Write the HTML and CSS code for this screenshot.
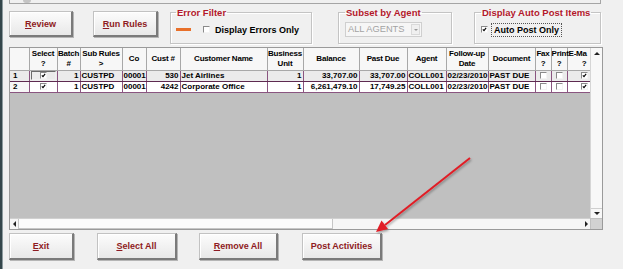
FILE: index.html
```html
<!DOCTYPE html>
<html lang="en">
  <head>
    <meta charset="UTF-8" />
    <meta name="viewport" content="width=device-width, initial-scale=1.0" />
    <title>Post Activities</title>
    <link rel="stylesheet" href="styles.css">
  </head>
  <body>
    <div class="window">
      <div class="top-edge"><span class="top-knob"></span></div>

      <div class="toolbar">
        <button class="btn review"><u>R</u>eview</button>
        <button class="btn run-rules"><u>R</u>un Rules</button>

        <fieldset class="group error-filter">
          <legend>Error Filter</legend>
          <div class="group-row">
            <span class="dash"></span>
            <span class="check"></span>
            <span class="check-text">Display Errors Only</span>
          </div>
        </fieldset>

        <fieldset class="group subset">
          <legend>Subset by Agent</legend>
          <div class="group-row">
            <div class="combo">
              <span class="combo-text">ALL AGENTS</span>
              <span class="combo-btn"><span class="tri-down small"></span></span>
            </div>
          </div>
        </fieldset>

        <fieldset class="group auto-post">
          <legend>Display Auto Post Items</legend>
          <div class="group-row">
            <span class="check checked"><svg viewBox="0 0 7 7"><polyline points="1.2,3.2 2.8,5 5.8,1.2" /></svg></span>
            <span class="check-text focus">Auto Post Only</span>
          </div>
        </fieldset>
      </div>

      <div class="grid">
        <div class="grid-body">
          <table>
            <colgroup>
              <col style="width: 19px">
              <col style="width: 28px">
              <col style="width: 23px">
              <col style="width: 42px">
              <col style="width: 24px">
              <col style="width: 34px">
              <col style="width: 87px">
              <col style="width: 36px">
              <col style="width: 56px">
              <col style="width: 48px">
              <col style="width: 39px">
              <col style="width: 42px">
              <col style="width: 47px">
              <col style="width: 16px">
              <col style="width: 16px">
              <col style="width: 23px">
            </colgroup>
            <thead>
              <tr>
                <th></th>
                <th>Select<br>?</th>
                <th>Batch<br>#</th>
                <th>Sub Rules<br>&gt;</th>
                <th>Co</th>
                <th>Cust #</th>
                <th>Customer Name</th>
                <th>Business<br>Unit</th>
                <th>Balance</th>
                <th>Past Due</th>
                <th>Agent</th>
                <th>Follow-up<br>Date</th>
                <th>Document</th>
                <th>Fax<br>?</th>
                <th>Print<br>?</th>
                <th class="email"><span class="clip">E-Ma</span><span class="q">?</span></th>
              </tr>
            </thead>
            <tbody>
              <tr class="current">
                <td class="num">1</td>
                <td class="c"><span class="cell-focus"><span class="check checked"><svg viewBox="0 0 7 7"><polyline points="1.2,3.2 2.8,5 5.8,1.2" /></svg></span></span></td>
                <td class="r">1</td>
                <td>CUSTPD</td>
                <td>00001</td>
                <td class="r">530</td>
                <td>Jet Airlines</td>
                <td class="r">1</td>
                <td class="r">33,707.00</td>
                <td class="r">33,707.00</td>
                <td>COLL001</td>
                <td>02/23/2010</td>
                <td>PAST DUE</td>
                <td class="c"><span class="check"></span></td>
                <td class="c"><span class="check"></span></td>
                <td class="r"><span class="check checked"><svg viewBox="0 0 7 7"><polyline points="1.2,3.2 2.8,5 5.8,1.2" /></svg></span></td>
              </tr>
              <tr>
                <td class="num">2</td>
                <td class="c"><span class="check checked"><svg viewBox="0 0 7 7"><polyline points="1.2,3.2 2.8,5 5.8,1.2" /></svg></span></td>
                <td class="r">1</td>
                <td>CUSTPD</td>
                <td>00001</td>
                <td class="r">4242</td>
                <td>Corporate Office</td>
                <td class="r">1</td>
                <td class="r">6,261,479.10</td>
                <td class="r">17,749.25</td>
                <td>COLL001</td>
                <td>02/23/2010</td>
                <td>PAST DUE</td>
                <td class="c"><span class="check"></span></td>
                <td class="c"><span class="check"></span></td>
                <td class="r"><span class="check checked"><svg viewBox="0 0 7 7"><polyline points="1.2,3.2 2.8,5 5.8,1.2" /></svg></span></td>
              </tr>
            </tbody>
          </table>
        </div>
        <div class="vscroll">
          <span class="tri-up"></span>
          <span class="vscroll-btn"><span class="tri-down"></span></span>
        </div>
        <div class="hscroll">
          <span class="hscroll-btn"><span class="tri-left"></span></span>
          <span class="thumb"></span>
          <span class="track"></span>
          <span class="hscroll-btn"><span class="tri-right"></span></span>
        </div>
        <div class="corner"></div>
      </div>

      <div class="actions">
        <button class="btn exit"><u>E</u>xit</button>
        <button class="btn select-all"><u>S</u>elect All</button>
        <button class="btn remove-all"><u>R</u>emove All</button>
        <button class="btn post">Post Activities</button>
      </div>

      <!-- callout arrow pointing at the Post Activities button -->
      <svg class="callout" viewBox="0 0 623 269">
        <defs>
          <filter id="soft" x="-20%" y="-20%" width="140%" height="140%">
            <feDropShadow dx="1" dy="1.5" stdDeviation="1" flood-color="#000" flood-opacity="0.35" />
          </filter>
        </defs>
        <g filter="url(#soft)">
          <line x1="470" y1="158" x2="385" y2="225" />
          <polygon points="376,232 388,229 381.5,220.5" />
        </g>
      </svg>
    </div>
  </body>
</html>
```

FILE: styles.css
```css
* {
  margin: 0;
  padding: 0;
  box-sizing: border-box;
}

body {
  font-family: "Liberation Sans", Arial, sans-serif;
  background-color: #f0f0f0;
}

.window {
  position: relative;
  width: 623px;
  height: 269px;
  padding-left: 9px;
  overflow: hidden;
  box-shadow: inset 2px 0 0 #34464b, inset 3px 0 0 #8c9a9e;
}

.top-edge {
  width: 592px;
  height: 4px;
  border: 1px solid #a5a5a5;
  border-top: none;
}

.top-knob {
  display: block;
  width: 8px;
  height: 3px;
  margin-left: 13px;
  background-color: #c4c4c4;
  border-radius: 0 0 3px 3px;
}

/* buttons */
.btn {
  display: flex;
  align-items: center;
  justify-content: center;
  font: bold 9px "Liberation Sans", Arial, sans-serif;
  color: #8e1b22;
  background: linear-gradient(#fcfcfc, #e8e8e8);
  border: 1px solid #c2c2c2;
  border-right: 2px solid #7a7a7a;
  border-bottom: 2px solid #7a7a7a;
  box-shadow: inset 1px 1px 0 #fff, 1px 1px 0 #b5b5b5;
  cursor: pointer;
}

.btn u {
  text-decoration: underline;
}

.toolbar {
  display: flex;
  align-items: flex-start;
  height: 41px;
}

.toolbar .btn {
  margin-top: 7px;
  height: 26px;
}

.review {
  width: 64px;
}

.run-rules {
  width: 65px;
  margin-left: 20px;
}

/* group boxes */
.group {
  margin-top: 3px;
  height: 37px;
  min-width: 0;
  padding: 0 5px;
  border: 1px solid #c4c4c4;
  box-shadow: inset 1px 1px 0 #fff, 1px 1px 0 #fff;
}

.group legend {
  padding: 0 1px;
  font-size: 9.5px;
  font-weight: bold;
  line-height: 11px;
  color: #b3182b;
}

.error-filter {
  width: 142px;
  margin-left: 12px;
}

.subset {
  width: 114px;
  margin-left: 26px;
  padding: 0 6px;
}

.auto-post {
  width: 127px;
  margin-left: 22px;
  padding: 0 6px;
}

.group-row {
  display: flex;
  align-items: center;
  height: 15px;
  margin-top: 4px;
}

.dash {
  width: 15px;
  height: 3px;
  background-color: #e8702a;
}

.error-filter .check {
  margin-left: 12px;
}

.check-text {
  margin-left: 5px;
  font-size: 9px;
  font-weight: bold;
  color: #000;
}

.check-text.focus {
  padding: 1px 2px;
  margin-left: 3px;
  border: 1px dotted #555;
}

.check {
  display: inline-block;
  width: 7px;
  height: 7px;
  border: 1px solid;
  border-color: #8a8a8a #f4f4f4 #f4f4f4 #8a8a8a;
  background-color: #fff;
  vertical-align: middle;
}

.check svg {
  display: block;
  width: 5px;
  height: 5px;
}

.check polyline {
  fill: none;
  stroke: #000;
  stroke-width: 1.6;
}

.combo {
  display: flex;
  width: 77px;
  height: 15px;
  border: 1px solid #cfcfcf;
  background-color: #f6f6f6;
}

.combo-text {
  flex: 1;
  padding-left: 2px;
  font-size: 9.3px;
  line-height: 13px;
  color: #a3a3a3;
}

.combo-btn {
  display: flex;
  align-items: center;
  justify-content: center;
  width: 9px;
  margin: 1px;
  border: 1px solid #dadada;
  background-color: #f0f0f0;
}

/* grid */
.grid {
  display: grid;
  grid-template-columns: 580px 12px;
  grid-template-rows: 170px 11px;
  width: 594px;
  height: 183px;
  margin-top: 2px;
  border: 1px solid #9a9a9a;
}

.grid-body {
  overflow: hidden;
  background-color: #c0c0c0;
}

table {
  width: 580px;
  table-layout: fixed;
  border-collapse: collapse;
  font-weight: bold;
  color: #000;
}

th {
  height: 22px;
  padding: 0;
  font-size: 8px;
  letter-spacing: -0.2px;
  line-height: 10px;
  text-align: center;
  vertical-align: middle;
  background-color: #f7f7f7;
  border: 1px solid #a8a8a8;
  border-top: none;
  white-space: nowrap;
}

th:first-child {
  border-left: none;
}

th.email {
  text-align: left;
}

th.email .clip {
  display: block;
  padding-left: 1px;
}

th.email .q {
  display: block;
  text-align: right;
  padding-right: 3px;
}

td {
  height: 11px;
  padding: 0 1px;
  font-size: 8px;
  line-height: 9px;
  white-space: nowrap;
  overflow: hidden;
  background-color: #fff;
  border: 1px solid #8a5580;
}

td:first-child {
  border-left: none;
  background-color: #f7f7f7;
}

tr.current td {
  background-color: #ebebeb;
  border-bottom-color: #5e2a50;
}

td.num {
  padding-left: 3px;
}

td.r {
  text-align: right;
}

td.c {
  text-align: center;
}

td .check {
  width: 7px;
  height: 7px;
  vertical-align: top;
  margin-top: 1px;
}

td.r .check {
  margin-right: 1px;
}

.cell-focus {
  display: block;
  height: 9px;
  border: 1px solid #555;
  border-color: #6a6a6a #f0f0f0 #f0f0f0 #6a6a6a;
}

.cell-focus .check {
  margin-top: 0;
}

/* scrollbars */
.vscroll {
  display: flex;
  flex-direction: column;
  justify-content: space-between;
  align-items: center;
  background-color: #f8f8f8;
  border-left: 1px solid #d6d6d6;
}

.vscroll .tri-up {
  margin-top: 4px;
}

.vscroll-btn {
  display: flex;
  align-items: center;
  justify-content: center;
  width: 100%;
  height: 10px;
  border-top: 1px solid #cfcfcf;
}

.hscroll {
  display: flex;
  align-items: stretch;
  background-color: #f6f6f6;
  border-top: 1px solid #d0d0d0;
}

.hscroll-btn {
  display: flex;
  align-items: center;
  justify-content: center;
  width: 8px;
}

.thumb {
  width: 315px;
  background-color: #fbfbfb;
  border: 1px solid #c6c6c6;
  border-top: none;
}

.track {
  flex: 1;
}

.corner {
  background-color: #d2d2d2;
  border-top: 1px solid #c0c0c0;
  border-left: 1px solid #c0c0c0;
}

.tri-up,
.tri-down,
.tri-left,
.tri-right {
  width: 0;
  height: 0;
  border: 3px solid transparent;
}

.tri-up {
  border-bottom-color: #222;
  border-top-width: 0;
}

.tri-down {
  border-top-color: #222;
  border-bottom-width: 0;
}

.tri-down.small {
  border-top-color: #9a9a9a;
  border-width: 2px 2px 0;
}

.tri-left {
  border-right-color: #222;
  border-left-width: 0;
}

.tri-right {
  border-left-color: #222;
  border-right-width: 0;
}

/* bottom buttons */
.actions {
  display: flex;
  margin-top: 3px;
}

.actions .btn {
  height: 27px;
}

.exit {
  width: 65px;
}

.select-all {
  width: 80px;
  margin-left: 23px;
}

.remove-all {
  width: 79px;
  margin-left: 22px;
}

.post {
  width: 80px;
  margin-left: 24px;
}

.callout {
  position: absolute;
  left: 0;
  top: 0;
  width: 623px;
  height: 269px;
  pointer-events: none;
}

.callout line {
  stroke: #e11d25;
  stroke-width: 2;
}

.callout polygon {
  fill: #e11d25;
}
```
